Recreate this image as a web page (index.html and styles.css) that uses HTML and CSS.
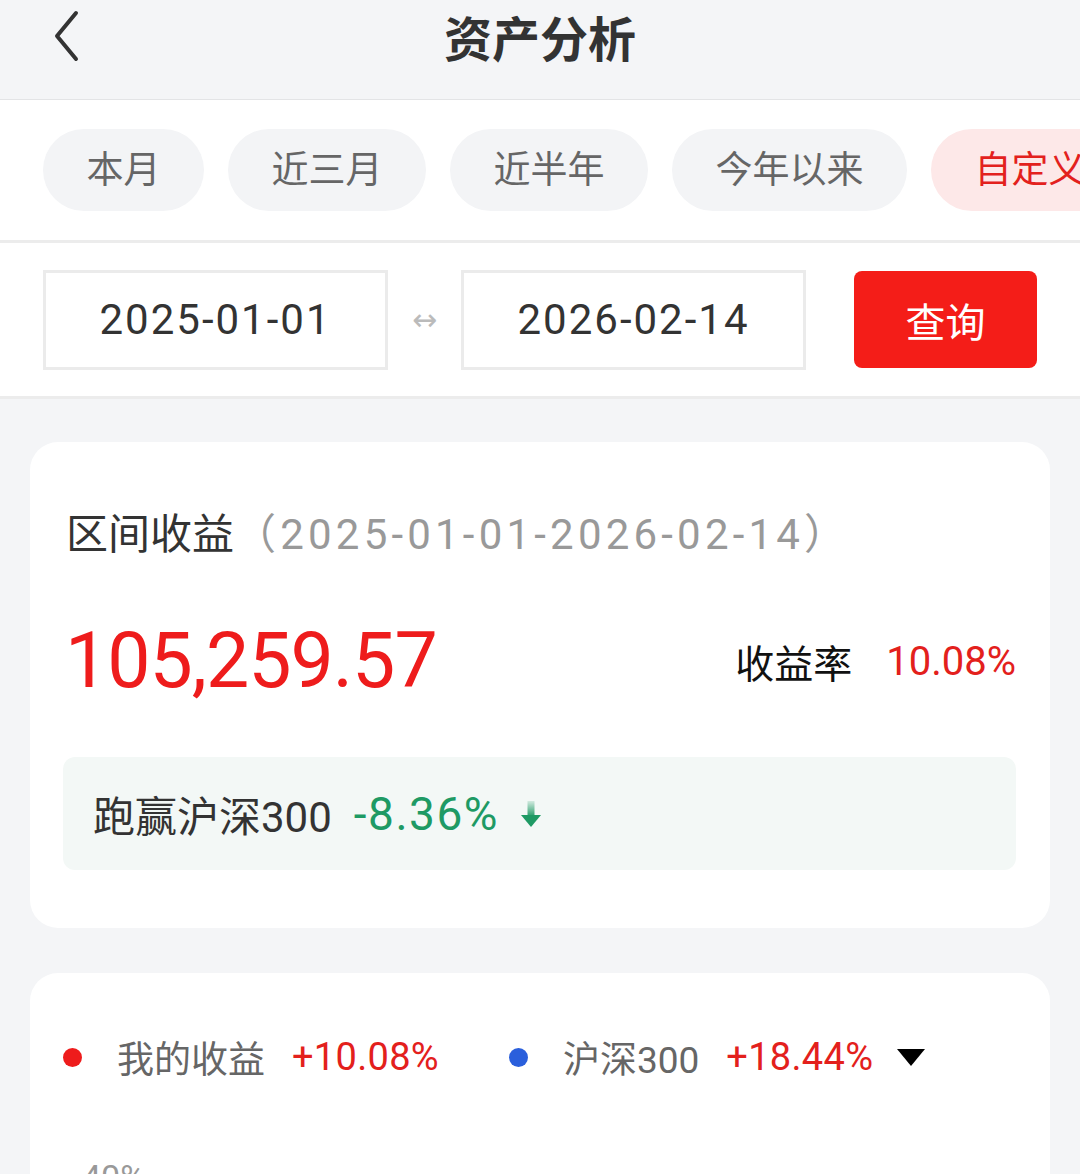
FILE: index.html
```html
<!DOCTYPE html>
<html lang="zh-CN">
<head>
    <meta charset="UTF-8">
    <meta name="viewport" content="width=device-width, initial-scale=1.0">
    <title>资产分析</title>
    <link rel="stylesheet" href="styles.css">
</head>
<body>

    <div class="nav">
        <svg class="back" width="28" height="52" viewBox="0 0 28 52">
            <path d="M24 3 L5 26 L24 49" fill="none" stroke="#333" stroke-width="4" stroke-linecap="round" stroke-linejoin="round"/>
        </svg>
        <h1>资产分析</h1>
    </div>

    <div class="tabs">
        <span class="tab">本月</span>
        <span class="tab">近三月</span>
        <span class="tab">近半年</span>
        <span class="tab">今年以来</span>
        <span class="tab active">自定义</span>
    </div>

    <div class="range">
        <div class="date-box">2025-01-01</div>
        <span class="arrow">↔</span>
        <div class="date-box">2026-02-14</div>
        <button class="query">查询</button>
    </div>

    <div class="main">
        <div class="card summary">
            <div class="sum-title">区间收益<span class="period">（2025-01-01-2026-02-14）</span></div>
            <div class="sum-row">
                <span class="amount">105,259.57</span>
                <span class="rate"><span class="rate-label">收益率</span><span class="rate-value">10.08%</span></span>
            </div>
            <div class="beat">
                <span class="beat-label">跑赢沪深300</span>
                <span class="beat-value">-8.36%</span>
                <svg class="down" width="24" height="30" viewBox="0 0 24 30">
                    <defs>
                        <linearGradient id="fade" x1="0" y1="0" x2="0" y2="1">
                            <stop offset="0" stop-color="#1e9a64" stop-opacity="0.15"/>
                            <stop offset="1" stop-color="#1e9a64" stop-opacity="1"/>
                        </linearGradient>
                    </defs>
                    <rect x="8.5" y="2" width="7" height="16" fill="url(#fade)"/>
                    <path d="M2 16 L22 16 L12 28 Z" fill="#1e9a64"/>
                </svg>
            </div>
        </div>

        <div class="card chart">
            <div class="legend">
                <span class="dot red"></span>
                <span class="leg-label">我的收益</span>
                <span class="leg-value">+10.08%</span>
                <span class="dot blue"></span>
                <span class="leg-label">沪深300</span>
                <span class="leg-value">+18.44%</span>
                <span class="caret"></span>
            </div>
            <div class="axis-label">40%</div>
        </div>
    </div>

</body>
</html>
```

FILE: styles.css
```css
body { margin: 0; background-color: #f4f5f7; font-family: Roboto, "Noto Sans CJK SC", sans-serif; color: #333; width: 1080px; overflow: hidden; }

.nav { height: 99px; position: relative; display: flex; justify-content: center; align-items: flex-start; background-color: #f4f5f7; border-bottom: 1px solid #e3e4e6; }
.nav .back { position: absolute; left: 52px; top: 10px; }
.nav h1 { margin: 0; padding-top: 6px; font-size: 48px; font-weight: 700; line-height: 60px; color: #333; font-family: "Noto Sans CJK SC", sans-serif; }

.tabs { display: flex; gap: 24px; padding: 29px 0 29px 43px; background-color: #fff; border-bottom: 3px solid #ececec; overflow: hidden; white-space: nowrap; }
.tab { flex: none; height: 82px; line-height: 76px; padding: 0 43.5px; border-radius: 41px; background-color: #f3f4f6; color: #666; font-size: 37px; font-family: "Noto Sans CJK SC", sans-serif; }
.tab.active { background-color: #fde8e8; color: #e3211d; }

.range { display: flex; align-items: center; height: 153px; padding: 0 43px; background-color: #fff; border-bottom: 3px solid #ececec; }
.date-box { width: 339px; height: 94px; line-height: 94px; border: 3px solid #ebebeb; text-align: center; font-size: 42px; letter-spacing: 2px; color: #333; }
.arrow { width: 73px; text-align: center; color: #bbb; font-size: 30px; font-family: "DejaVu Sans", sans-serif; }
.query { margin-left: 48px; width: 183px; height: 97px; border: none; border-radius: 8px; background-color: #f41d18; color: #fff; font-size: 40px; font-family: "Noto Sans CJK SC", sans-serif; }

.main { padding: 43px 30px 0; display: flex; flex-direction: column; gap: 45px; }
.card { background-color: #fff; border-radius: 28px; }

.summary { padding: 59px 34px 58px 33px; }
.sum-title { padding-left: 3px; font-size: 42px; line-height: 60px; color: #333; font-family: "Noto Sans CJK SC", sans-serif; }
.period { color: #999; letter-spacing: 4.2px; font-family: Roboto, "Noto Sans CJK SC", sans-serif; }
.sum-row { display: flex; justify-content: space-between; align-items: center; margin-top: 51px; height: 90px; padding-left: 2px; }
.amount { font-size: 77px; color: #ee1c1c; letter-spacing: -1px; }
.rate { display: flex; align-items: center; }
.rate-label { font-size: 39px; color: #111; font-family: "Noto Sans CJK SC", sans-serif; }
.rate-value { margin-left: 34px; font-size: 40px; color: #e3201c; }
.beat { display: flex; align-items: center; margin-top: 51px; height: 113px; padding-left: 30px; border-radius: 12px; background-color: #f3f8f6; }
.beat-label { font-size: 42px; color: #333; }
.beat-value { margin-left: 22px; font-size: 46px; letter-spacing: 1.5px; color: #1e9a64; }
.down { margin-left: 20px; }

.chart { height: 240px; padding: 62px 33px 0; }
.legend { display: flex; align-items: center; height: 44px; }
.dot { width: 19px; height: 19px; border-radius: 50%; }
.dot.red { background-color: #ee1c1c; }
.dot.blue { background-color: #2a5fdc; margin-left: 70px; }
.leg-label { margin-left: 35px; font-size: 37px; color: #666; }
.leg-value { margin-left: 27px; font-size: 38px; letter-spacing: 0.3px; color: #e3201c; }
.caret { margin-left: 24px; width: 0; height: 0; border-left: 14px solid transparent; border-right: 14px solid transparent; border-top: 17px solid #000; }
.axis-label { margin-top: 78px; padding-left: 19px; font-size: 34px; color: #999; }
```
